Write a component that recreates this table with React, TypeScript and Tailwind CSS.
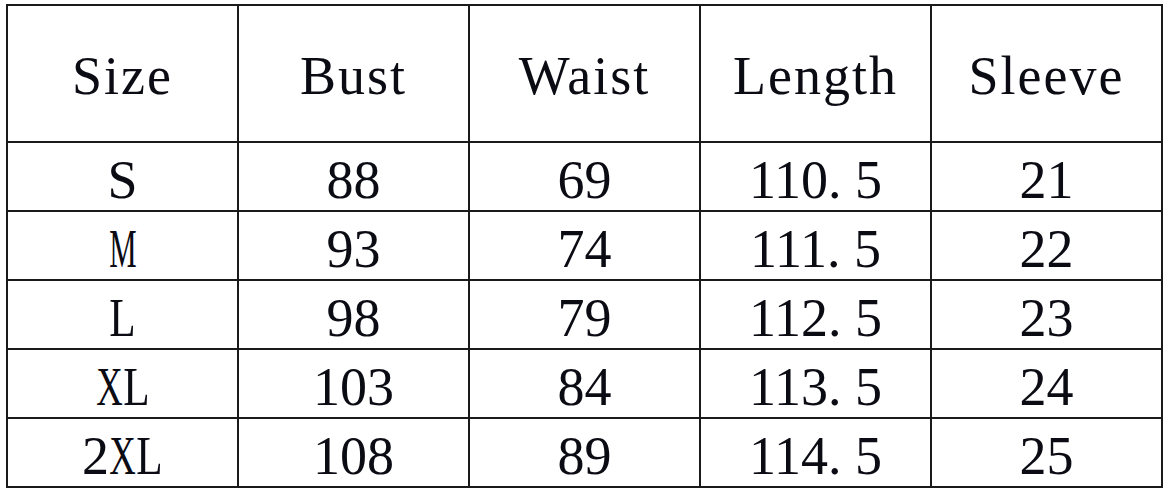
const headers = ["Size", "Bust", "Waist", "Length", "Sleeve"];

const rows = [
  ["S", "88", "69", "110.5", "21"],
  ["M", "93", "74", "111.5", "22"],
  ["L", "98", "79", "112.5", "23"],
  ["XL", "103", "84", "113.5", "24"],
  ["2XL", "108", "89", "114.5", "25"],
];

// the source font is half-width monospaced, so squeeze the wide capitals
const squeeze: Record<string, string> = {
  M: "scale-x-[0.57]",
  X: "scale-x-[0.68]",
  L: "scale-x-[0.8]",
};

const SizeLabel = ({ text }: { text: string }) => (
  <span className="flex">
    {text.split("").map((ch, i) => (
      <span key={i} className="flex justify-center w-[27px]">
        <span className={"inline-block " + (squeeze[ch] ?? "")}>{ch}</span>
      </span>
    ))}
  </span>
);

// the source font has a half-width period, so pad the dot
const Value = ({ text }: { text: string }) => {
  const parts = text.split(".");
  if (parts.length < 2) return <>{text}</>;
  return (
    <>
      {parts[0]}
      <span className="mr-[0.25em]">.</span>
      {parts[1]}
    </>
  );
};

export default function App() {
  return (
    <div className="w-[1167px] h-[496px] bg-white pt-[4px] pl-[6px] font-['Liberation_Serif',serif] text-[#0b0b14]">
      <div className="grid grid-cols-[repeat(5,231px)] w-fit border-l-2 border-t-2 border-[#1a1a1a]">
        {headers.map((h) => (
          <div
            key={h}
            className="h-[137px] flex items-center justify-center border-r-2 border-b-2 border-[#1a1a1a] text-[54px] tracking-[2px] pt-[6px]"
          >
            {h}
          </div>
        ))}
        {rows.map((row) =>
          row.map((cell, i) => (
            <div
              key={row[0] + i}
              className="h-[69px] flex items-center justify-center border-r-2 border-b-2 border-[#1a1a1a] text-[54px] leading-none pt-[6px]"
            >
              {i === 0 ? <SizeLabel text={cell} /> : <Value text={cell} />}
            </div>
          ))
        )}
      </div>
    </div>
  );
}
